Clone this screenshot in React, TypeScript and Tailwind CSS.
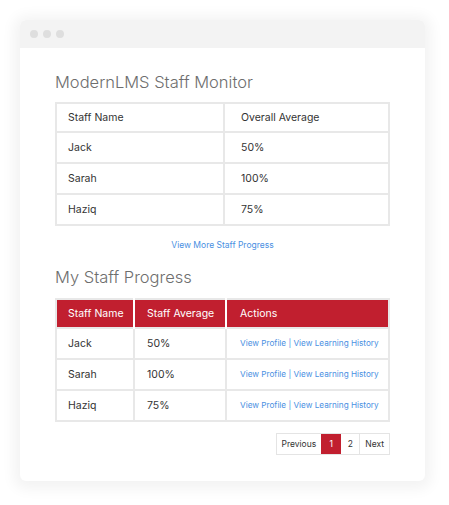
const staff = [
  { name: "Jack", average: "50%" },
  { name: "Sarah", average: "100%" },
  { name: "Haziq", average: "75%" },
];

export default function App() {
  return (
    <div
      className="min-h-[505px] w-[449px] bg-white pt-[20px] pl-[20px] text-[#333]"
      style={{ fontFamily: "Inter, 'Open Sans', sans-serif" }}
    >
      <div className="w-[405px] overflow-hidden rounded-[6px] bg-white shadow-[0_2px_14px_6px_rgba(0,0,0,0.05)]">
        <div className="flex h-[28px] items-center gap-[5px] bg-[#f3f3f3] pl-[10px]">
          <span className="h-[8px] w-[8px] rounded-full bg-[#dedede]" />
          <span className="h-[8px] w-[8px] rounded-full bg-[#dedede]" />
          <span className="h-[8px] w-[8px] rounded-full bg-[#dedede]" />
        </div>

        <div className="px-[35px] pt-[24px] pb-[26px]">
          <h1 className="m-0 text-[16.5px] leading-[20px] font-light text-[#6e6e6e]">ModernLMS Staff Monitor</h1>

          <table className="mt-[10px] w-[335px] border-collapse border-2 border-[#e8e8e8] text-[10.5px]">
            <tbody>
              <tr className="h-[29px]">
                <td className="w-[168px] border-2 border-[#e8e8e8] pt-[1px] pl-[11px]">Staff Name</td>
                <td className="border-2 border-[#e8e8e8] pt-[1px] pl-[16px]">Overall Average</td>
              </tr>
              {staff.map((row) => (
                <tr key={row.name} className="h-[31px]">
                  <td className="border-2 border-[#e8e8e8] pt-[1px] pl-[11px]">{row.name}</td>
                  <td className="border-2 border-[#e8e8e8] pt-[1px] pl-[16px]">{row.average}</td>
                </tr>
              ))}
            </tbody>
          </table>

          <p className="m-0 mt-[13px] text-center text-[8.5px] leading-[12px] text-[#4a90e2]">View More Staff Progress</p>

          <h2 className="m-0 mt-[16px] text-[16.5px] leading-[20px] font-light text-[#6e6e6e]">My Staff Progress</h2>

          <table className="mt-[11px] w-[335px] border-collapse border-2 border-[#e8e8e8] text-[10.5px]">
            <thead>
              <tr className="h-[29px] bg-[#c11f2f] text-white">
                <th className="w-[78px] border-r-2 border-white pt-[1px] pl-[11px] text-left font-normal">Staff Name</th>
                <th className="w-[92px] border-r-2 border-white pt-[1px] pl-[12px] text-left font-normal">Staff Average</th>
                <th className="pt-[1px] pl-[13px] text-left font-normal">Actions</th>
              </tr>
            </thead>
            <tbody>
              {staff.map((row) => (
                <tr key={row.name} className="h-[31px]">
                  <td className="border-2 border-[#e8e8e8] pt-[1px] pl-[11px]">{row.name}</td>
                  <td className="border-2 border-[#e8e8e8] pt-[1px] pl-[12px]">{row.average}</td>
                  <td className="border-2 border-[#e8e8e8] pl-[13px] text-[8.2px] text-[#4a90e2]">
                    View Profile | View Learning History
                  </td>
                </tr>
              ))}
            </tbody>
          </table>

          <div className="mt-[11px] flex justify-end">
            <div className="flex h-[22px] border border-[#e4e4e4] text-[8.5px]">
              <span className="flex items-center px-[5px]">Previous</span>
              <span className="flex w-[20px] items-center justify-center bg-[#c11f2f] text-white">1</span>
              <span className="flex w-[19px] items-center justify-center border-r border-[#e4e4e4]">2</span>
              <span className="flex items-center px-[5px]">Next</span>
            </div>
          </div>
        </div>
      </div>
    </div>
  );
}
